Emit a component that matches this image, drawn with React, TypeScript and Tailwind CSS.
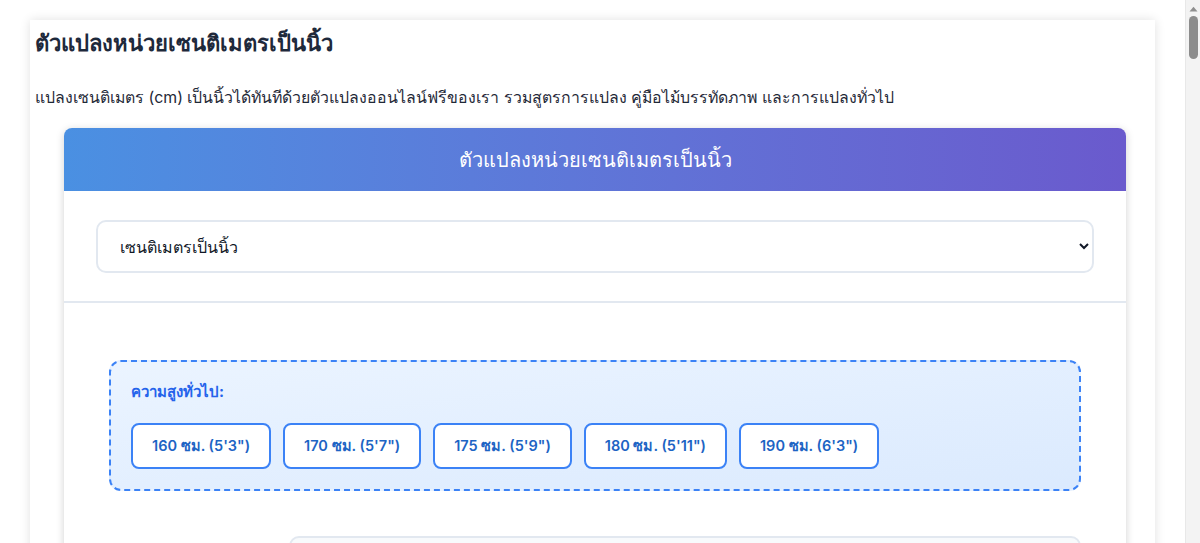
const heights = [
  { cm: 160, ft: `5'3"` },
  { cm: 170, ft: `5'7"` },
  { cm: 175, ft: `5'9"` },
  { cm: 180, ft: `5'11"` },
  { cm: 190, ft: `6'3"` },
];

function ScrollTrack() {
  // page scrollbar strip on the right edge
  return (
    <div className="fixed right-0 top-0 h-screen w-[15px] bg-[#f3f3f3] border-l border-[#e8e8e8] flex flex-col items-center">
      <svg width="9" height="6" viewBox="0 0 9 6" className="mt-[6px]">
        <path d="M0.5 5.5 L4.5 0.8 L8.5 5.5 Z" fill="#8f8f8f" />
      </svg>
      <div className="mt-[4px] h-[43px] w-[9px] rounded-full bg-[#8c8c8c]" />
    </div>
  );
}

export default function App() {
  return (
    <div className="min-h-[900px] bg-white font-['Inter',sans-serif] text-[#1f2937]">
      <div className="pl-[30px] pr-[45px] pt-[20px]">
        <div className="bg-white shadow-[0_0_10px_rgba(0,0,0,0.12)] px-[5px] pt-[8px] pb-10">
          <h1 className="text-[22px] font-bold leading-[30px] text-[#1e293b]">ตัวแปลงหน่วยเซนติเมตรเป็นนิ้ว</h1>
          <p className="mt-[29px] text-[15.85px] leading-[22px] text-[#1f2937]">
            แปลงเซนติเมตร (cm) เป็นนิ้วได้ทันทีด้วยตัวแปลงออนไลน์ฟรีของเรา รวมสูตรการแปลง คู่มือไม้บรรทัดภาพ และการแปลงทั่วไป
          </p>

          <div className="mt-[19px] ml-[29px] mr-[24px] rounded-lg bg-white shadow-[0_2px_8px_rgba(0,0,0,0.18)] overflow-hidden">
            <div className="h-[63px] flex items-center justify-center bg-gradient-to-r from-[#4a90e2] to-[#6a5acd]">
              <h2 className="text-[20px] text-white">ตัวแปลงหน่วยเซนติเมตรเป็นนิ้ว</h2>
            </div>

            <div className="px-[32px] pt-[29px] pb-[28px] border-b-2 border-[#e2e8f0]">
              <select className="w-full h-[53px] rounded-[10px] border-2 border-[#e2e8f0] bg-white pl-[18px] pr-[12px] text-[16px] text-[#111827]">
                <option>เซนติเมตรเป็นนิ้ว</option>
                <option>นิ้วเป็นเซนติเมตร</option>
              </select>
            </div>

            <div className="px-[45px] pt-[57px] pb-10">
              <div className="rounded-xl border-2 border-dashed border-[#3b82f6] bg-gradient-to-br from-[#ebf4ff] to-[#dbeafe] px-[20px] pt-[19px] pb-[20px]">
                <div className="text-[15px] font-bold text-[#2563eb] leading-[22px]">ความสูงทั่วไป:</div>
                <div className="mt-[20px] flex gap-[12px]">
                  {heights.map((h) => (
                    <button
                      key={h.cm}
                      className="h-[46px] rounded-lg border-2 border-[#3b82f6] bg-white px-[19px] text-[14.5px] font-semibold text-[#1d64c4]"
                    >
                      {h.cm} ซม. ({h.ft})
                    </button>
                  ))}
                </div>
              </div>

              <div className="mt-[45px] flex">
                <div className="w-[180px] shrink-0" />
                <div className="flex-1 h-[60px] rounded-[10px] border-2 border-[#e2e8f0] bg-[#f8fafc]" />
              </div>
            </div>
          </div>
        </div>
      </div>
      <ScrollTrack />
    </div>
  );
}
